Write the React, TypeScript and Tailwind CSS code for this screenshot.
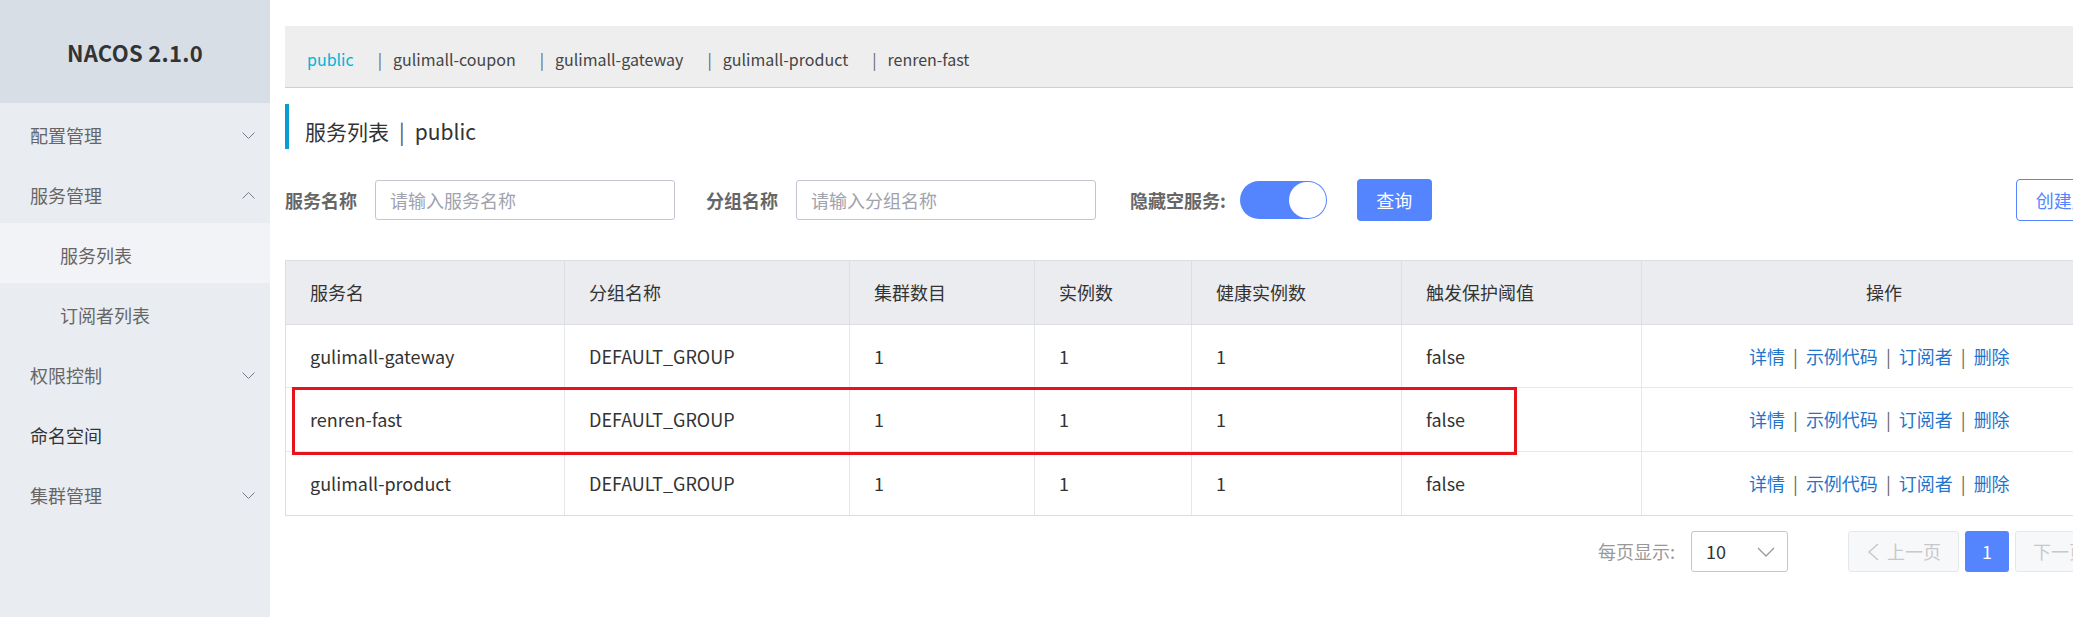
import React from 'react';

const menu = [
  { label: '配置管理', arrow: 'down', level: 0 },
  { label: '服务管理', arrow: 'up', level: 0 },
  { label: '服务列表', level: 1, active: true },
  { label: '订阅者列表', level: 1 },
  { label: '权限控制', arrow: 'down', level: 0 },
  { label: '命名空间', level: 0, dark: true },
  { label: '集群管理', arrow: 'down', level: 0 },
];

const namespaces = ['gulimall-coupon', 'gulimall-gateway', 'gulimall-product', 'renren-fast'];

const rows = [
  { name: 'gulimall-gateway', h: 'h-[63px]' },
  { name: 'renren-fast', h: 'h-[64px]' },
  { name: 'gulimall-product', h: 'h-[63px]' },
];

const cols = 'grid grid-cols-[279px_285px_185px_157px_210px_240px_484px]';

function Chevron({ dir }: { dir: string }) {
  return (
    <svg width="13" height="7" viewBox="0 0 13 7" className="shrink-0">
      <polyline
        points={dir === 'up' ? '0.5,6.5 6.5,0.5 12.5,6.5' : '0.5,0.5 6.5,6.5 12.5,0.5'}
        fill="none"
        stroke="#7a7d85"
        strokeWidth="1"
      />
    </svg>
  );
}

export default function App() {
  return (
    <div className="relative flex w-[2073px] h-[617px] overflow-hidden bg-white font-['Noto_Sans_CJK_SC',sans-serif] text-[#333]">
      {/* sidebar */}
      <div className="w-[270px] shrink-0 bg-[#e9edf2]">
        <div className="h-[103px] bg-[#d8dee6] flex items-center justify-center pt-[2px]">
          <span className="text-[22px] font-bold text-[#333] tracking-[0.3px]">NACOS 2.1.0</span>
        </div>
        {menu.map((m) => (
          <div
            key={m.label}
            className={`h-[60px] flex items-center justify-between pr-[15px] pt-[4px] text-[18px] ${
              m.level === 1 ? 'pl-[60px]' : 'pl-[30px]'
            } ${m.active ? 'bg-[#f2f3f7]' : ''} ${m.dark ? 'text-[#333]' : 'text-[#666]'}`}
          >
            <span>{m.label}</span>
            {m.arrow && <Chevron dir={m.arrow} />}
          </div>
        ))}
      </div>

      {/* main */}
      <div className="flex-1 pl-[15px] pt-[26px]">
        <div className="h-[62px] bg-[#eeeeee] border-b border-[#cfcfcf] flex items-center pl-[22px] pt-[4px] gap-[24px] text-[16px] w-[1900px]">
          <span className="text-[#00b4d8]">public</span>
          {namespaces.map((n) => (
            <span key={n} className="text-[#444]">
              <span className="text-[#666] mr-[11px]">|</span>
              {n}
            </span>
          ))}
        </div>

        <div className="mt-[16px] h-[45px] border-l-4 border-[#0a9cd2] flex items-center pl-[16px] pt-[10px] text-[21px] text-[#333]">
          <span>服务列表</span>
          <span className="mx-[10px] text-[#555]">|</span>
          <span>public</span>
        </div>

        <div className="mt-[30px] h-[42px] flex items-center text-[18px] w-[1900px]">
          <span className="font-bold text-[#666] shrink-0">服务名称</span>
          <div className="ml-[18px] w-[300px] h-[40px] shrink-0 border border-[#c4c6cf] rounded-[3px] flex items-center pl-[14px] text-[#a0a2ad]">
            请输入服务名称
          </div>
          <span className="ml-[31px] font-bold text-[#666] shrink-0">分组名称</span>
          <div className="ml-[18px] w-[300px] h-[40px] shrink-0 border border-[#c4c6cf] rounded-[3px] flex items-center pl-[14px] text-[#a0a2ad]">
            请输入分组名称
          </div>
          <span className="ml-[34px] font-bold text-[#666] shrink-0">隐藏空服务:</span>
          <div className="ml-[14px] w-[87px] h-[38px] shrink-0 rounded-full bg-[#5584ff] flex items-center justify-end pr-[1px]">
            <div className="w-[37px] h-[36px] rounded-full bg-white" />
          </div>
          <button className="ml-[30px] w-[75px] h-[42px] shrink-0 rounded-[4px] bg-[#5584ff] text-white text-[18px]">
            查询
          </button>
          <button className="ml-[584px] h-[42px] px-[19px] shrink-0 rounded-[4px] border border-[#5584ff] text-[#5584ff] text-[18px] bg-white">
            创建服务
          </button>
        </div>

        <div className="mt-[39px] w-[1840px] border border-[#dcdee3] text-[18px]">
          <div className={`${cols} h-[64px] bg-[#ebecf0] border-b border-[#dcdee3] text-[#333]`}>
            {['服务名', '分组名称', '集群数目', '实例数', '健康实例数', '触发保护阈值'].map((h) => (
              <div key={h} className="flex items-center pl-[24px] border-r border-[#dcdee3]">
                {h}
              </div>
            ))}
            <div className="flex items-center justify-center">操作</div>
          </div>
          {rows.map((r, i) => (
            <div
              key={r.name}
              className={`${cols} ${r.h} ${i < rows.length - 1 ? 'border-b border-[#e6e7eb]' : ''} text-[#333]`}
            >
              {[r.name, 'DEFAULT_GROUP', '1', '1', '1', 'false'].map((c, j) => (
                <div key={j} className="flex items-center pl-[24px] border-r border-[#e6e7eb]">
                  {c}
                </div>
              ))}
              <div className="flex items-center pl-[107px] text-[#1f74cc]">
                <span>详情</span>
                <span className="mx-[8px] text-[#666]">|</span>
                <span>示例代码</span>
                <span className="mx-[8px] text-[#666]">|</span>
                <span>订阅者</span>
                <span className="mx-[8px] text-[#666]">|</span>
                <span>删除</span>
              </div>
            </div>
          ))}
        </div>

        <div className="mt-[15px] h-[41px] flex items-center text-[18px] w-[1900px]">
          <span className="ml-[1313px] text-[#999] shrink-0">每页显示:</span>
          <div className="ml-[16px] w-[97px] h-[41px] shrink-0 border border-[#c4c6cf] rounded-[3px] flex items-center justify-between pl-[14px] pr-[12px] text-[#333]">
            <span>10</span>
            <svg width="18" height="10" viewBox="0 0 18 10">
              <polyline points="1,1 9,9 17,1" fill="none" stroke="#999" strokeWidth="1.3" />
            </svg>
          </div>
          <div className="ml-[60px] w-[111px] h-[41px] shrink-0 border border-[#e6e7eb] bg-[#f7f8fa] rounded-[3px] flex items-center pl-[18px] text-[#c8c8cc]">
            <svg width="12" height="18" viewBox="0 0 12 18" className="mr-[8px]">
              <polyline points="11,1 2,9 11,17" fill="none" stroke="#c8c8cc" strokeWidth="1.5" />
            </svg>
            上一页
          </div>
          <div className="ml-[6px] w-[44px] h-[41px] shrink-0 rounded-[3px] bg-[#5584ff] text-white flex items-center justify-center">
            1
          </div>
          <div className="ml-[6px] w-[111px] h-[41px] shrink-0 border border-[#e6e7eb] bg-[#f7f8fa] rounded-[3px] flex items-center pl-[17px] text-[#c8c8cc]">
            下一页
            <svg width="12" height="18" viewBox="0 0 12 18" className="ml-[8px]">
              <polyline points="1,1 10,9 1,17" fill="none" stroke="#c8c8cc" strokeWidth="1.5" />
            </svg>
          </div>
        </div>
      </div>

      {/* annotation box */}
      <div className="absolute left-[292px] top-[387px] w-[1225px] h-[68px] border-[3px] border-[#e5141c] pointer-events-none" />
    </div>
  );
}
